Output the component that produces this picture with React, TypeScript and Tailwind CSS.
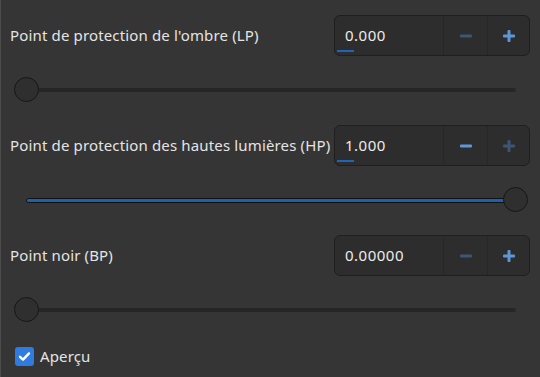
import React from "react";

type Row = {
  label: string;
  value: string;
  underline: boolean;
  minusOn: boolean;
  plusOn: boolean;
  pos: number; // 0..1
};

const rows: Row[] = [
  { label: "Point de protection de l'ombre (LP)", value: "0.000", underline: true, minusOn: false, plusOn: true, pos: 0 },
  { label: "Point de protection des hautes lumières (HP)", value: "1.000", underline: true, minusOn: true, plusOn: false, pos: 1 },
  { label: "Point noir (BP)", value: "0.00000", underline: false, minusOn: false, plusOn: true, pos: 0 },
];

function Minus({ on }: { on: boolean }) {
  return (
    <svg width="14" height="14" viewBox="0 0 14 14">
      <rect x="1" y="5.5" width="12" height="3" rx="1" fill={on ? "#5e97d8" : "#3e5576"} />
    </svg>
  );
}

function Plus({ on }: { on: boolean }) {
  const c = on ? "#5e97d8" : "#3e5576";
  return (
    <svg width="14" height="14" viewBox="0 0 14 14">
      <rect x="1" y="5.5" width="12" height="3" rx="1" fill={c} />
      <rect x="5.5" y="1" width="3" height="12" rx="1" fill={c} />
    </svg>
  );
}

function SpinBox({ row }: { row: Row }) {
  return (
    <div className="flex h-[41px] w-[196px] shrink-0 overflow-hidden rounded-[6px] border border-[#1f1f1f] bg-[#2d2d2d]">
      <div className="relative flex w-[108px] items-center pl-[10px] text-[15px] tracking-[0.5px] text-[#ececec]">
        {row.value}
        {row.underline && (
          <span className="absolute bottom-[3px] left-[2px] h-[2px] w-[17px] bg-[#1f64b8]" />
        )}
      </div>
      <div className="flex w-[44px] items-center justify-center border-l border-[#272727]">
        <Minus on={row.minusOn} />
      </div>
      <div className="flex flex-1 items-center justify-center border-l border-[#272727]">
        <Plus on={row.plusOn} />
      </div>
    </div>
  );
}

function Slider({ pos }: { pos: number }) {
  const filled = pos > 0;
  return (
    <div className="relative ml-[13px] h-[26px] w-[514px]">
      <div
        className={
          filled
            ? "absolute left-[12px] right-[12px] top-[11px] h-[5px] rounded-full border border-[#111] bg-[#1f5fae]"
            : "absolute left-[12px] right-[12px] top-[11px] h-[4px] rounded-full bg-[#262626]"
        }
      />
      <div
        className="absolute top-0 h-[25px] w-[25px] rounded-full border border-[#171717] bg-[#2f2f2f]"
        style={{ left: `${pos * (514 - 25)}px` }}
      />
    </div>
  );
}

export default function App() {
  return (
    <div
      className="h-[377px] w-[540px] overflow-hidden border-l border-[#4d4d4d] bg-[#353535] text-[15px] tracking-[0.15px] text-[#e4e4e4]"
      style={{ fontFamily: "'Noto Sans', sans-serif" }}
    >
      <div className="flex flex-col pt-[15px]">
        {rows.map((row, i) => (
          <div key={i} className="flex h-[110px] flex-col">
            <div className="flex items-center justify-between pl-[9px] pr-[10px]">
              <span>{row.label}</span>
              <SpinBox row={row} />
            </div>
            <div className="mt-[21px]">
              <Slider pos={row.pos} />
            </div>
          </div>
        ))}
        <div className="mt-0 flex items-center gap-[6px] pl-[14px]">
          <span className="flex h-[19px] w-[19px] items-center justify-center rounded-[3px] bg-[#2f7be0]">
            <svg width="13" height="13" viewBox="0 0 13 13">
              <path d="M2 6.8 L5 9.6 L11 3.4" stroke="#fff" strokeWidth="2.4" fill="none" strokeLinecap="round" strokeLinejoin="round" />
            </svg>
          </span>
          <span>Aperçu</span>
        </div>
      </div>
    </div>
  );
}
